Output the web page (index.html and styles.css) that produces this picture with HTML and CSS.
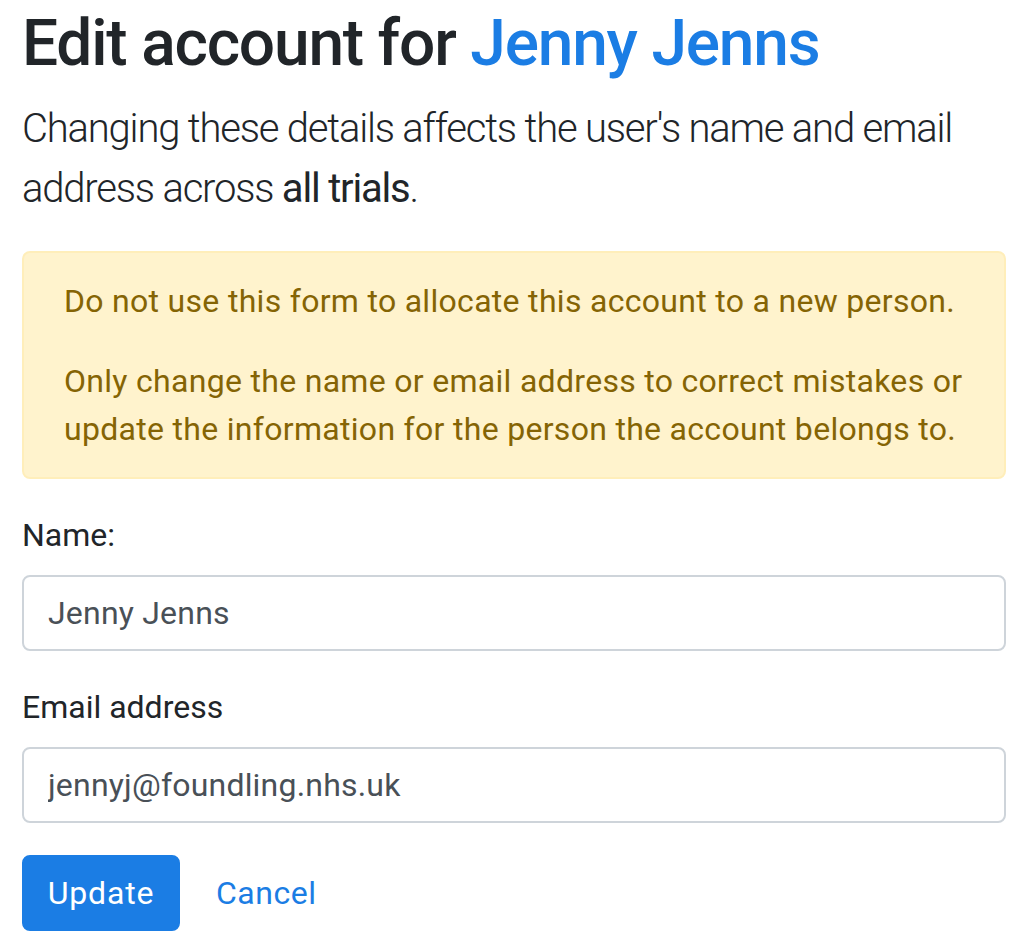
FILE: index.html
```html
<!DOCTYPE html>
<html lang="en">
<head>
<meta charset="utf-8">
<title>Edit account</title>
<link rel="stylesheet" href="styles.css">
</head>
<body>
<main class="page">
  <h1 class="title">Edit account for <a href="#" class="title-link">Jenny Jenns</a></h1>
  <p class="lead">Changing these details affects the user's name and email address across <strong>all trials</strong>.</p>
  <div class="alert">
    <p>Do not use this form to allocate this account to a new person.</p>
    <p>Only change the name or email address to correct mistakes or update the information for the person the account belongs to.</p>
  </div>
  <form class="form">
    <div class="form-group">
      <label class="label" for="name">Name:</label>
      <input class="input" id="name" type="text" value="Jenny Jenns">
    </div>
    <div class="form-group">
      <label class="label" for="email">Email address</label>
      <input class="input" id="email" type="email" value="jennyj@foundling.nhs.uk">
    </div>
    <div class="actions">
      <button type="button" class="btn-primary">Update</button>
      <a href="#" class="cancel">Cancel</a>
    </div>
  </form>
</main>
</body>
</html>
```

FILE: styles.css
```css
html, body {
  margin: 0;
  padding: 0;
  background: #fff;
}
body {
  font-family: Roboto, "Liberation Sans", sans-serif;
  font-size: 32px;
  line-height: 1.5;
  color: #212529;
}
.page {
  width: 984px;
  padding: 6px 0 0 22px;
}
.title {
  margin: 0 0 16px;
  font-size: 64px;
  font-weight: 500;
  line-height: 1.2;
  letter-spacing: -1.2px;
  color: #212529;
}
.title-link {
  color: #1b7de4;
  text-decoration: none;
}
.lead {
  margin: 0 0 32px;
  font-size: 40px;
  font-weight: 300;
  line-height: 1.5;
  letter-spacing: -1.2px;
}
.lead strong {
  font-weight: 400;
}
.alert {
  background: #fff3cd;
  border: 2px solid #ffeeba;
  border-radius: 8px;
  color: #856404;
  padding: 24px 40px;
  margin-bottom: 32px;
  letter-spacing: 0.3px;
}
.alert p {
  margin: 0 0 32px;
}
.alert p:last-child {
  margin-bottom: 0;
}
.form {
  margin: 0;
}
.form-group {
  margin-bottom: 32px;
}
.label {
  display: block;
  margin-bottom: 16px;
}
.input {
  display: block;
  box-sizing: border-box;
  width: 100%;
  height: 76px;
  padding: 12px 24px;
  border: 2px solid #ced4da;
  border-radius: 8px;
  font-family: inherit;
  font-size: 32px;
  line-height: 1.5;
  letter-spacing: 0.2px;
  color: #495057;
  background: #fff;
  margin: 0;
}
.actions {
  display: flex;
  align-items: center;
  gap: 36px;
}
.btn-primary {
  box-sizing: border-box;
  width: 158px;
  height: 76px;
  padding: 12px 0;
  border: 2px solid #1b7de4;
  border-radius: 8px;
  background: #1b7de4;
  color: #fff;
  font-family: inherit;
  font-size: 32px;
  line-height: 1.5;
  letter-spacing: 0.8px;
  text-align: center;
  cursor: pointer;
}
.cancel {
  color: #1b7de4;
  text-decoration: none;
  font-size: 32px;
  letter-spacing: 0.5px;
}
```
